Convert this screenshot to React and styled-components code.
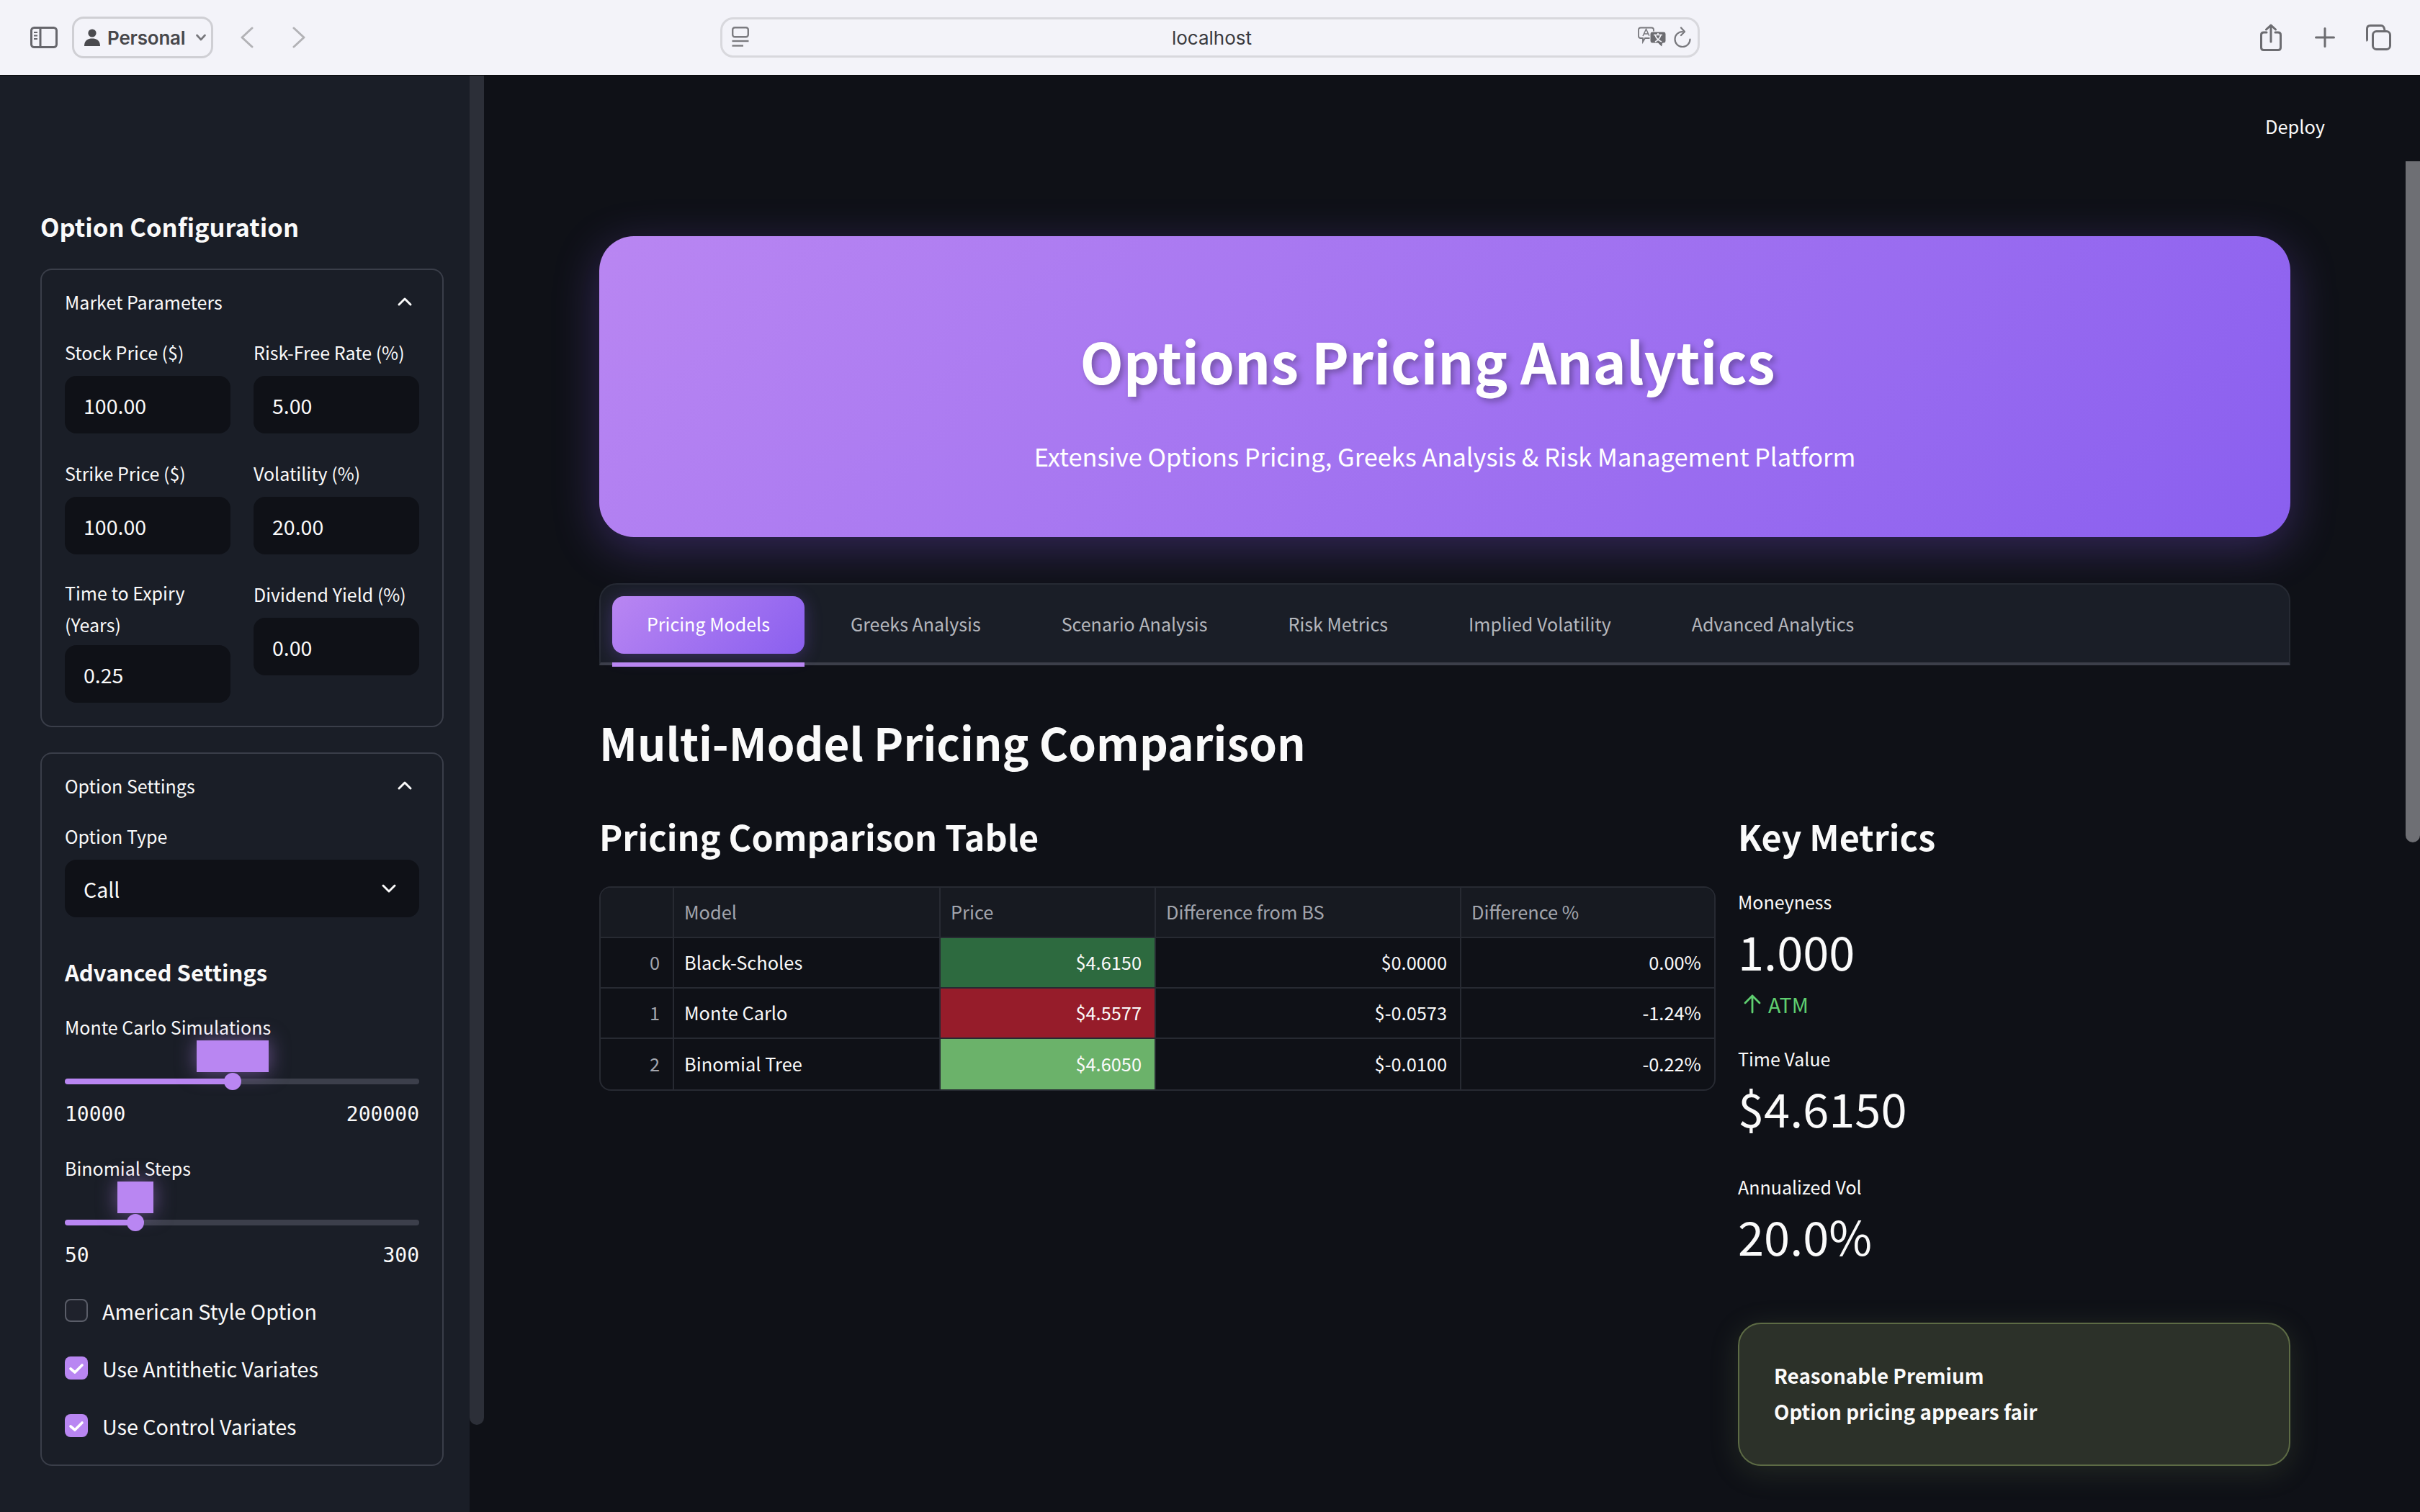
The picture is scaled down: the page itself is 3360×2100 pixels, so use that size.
import React from "react";
import styled, { createGlobalStyle } from "styled-components";

const SANS = `"Noto Sans CJK SC", "Noto Sans", sans-serif`;
const PURPLE = "#b986f2";
const MAIN_BG = "#0f1117";

const Global = createGlobalStyle`
  html, body { margin: 0; padding: 0; background: ${MAIN_BG}; }
  * { box-sizing: border-box; }
  body { font-family: ${SANS}; color: #fafafa; }
`;

const Page = styled.div`
  width: 3360px;
  height: 2100px;
  display: flex;
  flex-direction: column;
  overflow: hidden;
  position: relative;
`;

/* ---------- browser chrome ---------- */
const Toolbar = styled.header`
  flex: 0 0 105px;
  display: grid;
  grid-template-columns: 1000px 1360px 1fr;
  align-items: center;
  background: #f3f3f9;
  border-bottom: 1px solid #08090b;
`;
const ToolLeft = styled.div`
  display: flex;
  align-items: center;
  padding-left: 42px;
`;
const ToolIcon = styled.svg`
  display: block;
  flex: none;
  margin-left: ${(p) => p.$ml || 0}px;
`;
const ProfilePill = styled.div`
  display: flex;
  align-items: center;
  width: 196px;
  height: 58px;
  margin-left: 20px;
  padding-left: 14px;
  border: 3px solid #cfcfd4;
  border-radius: 16px;
  font-family: Inter, sans-serif;
  font-weight: 600;
  font-size: 26px;
  color: #47474b;
`;
const ProfileName = styled.span`
  margin-left: 10px;
  letter-spacing: -0.2px;
`;
const UrlBar = styled.div`
  height: 56px;
  display: flex;
  align-items: center;
  padding: 0 9px 0 13px;
  border: 3px solid #d8d8dd;
  border-radius: 18px;
`;
const UrlText = styled.span`
  flex: 1;
  text-align: center;
  font-family: Inter, sans-serif;
  font-size: 26px;
  color: #3a3a3e;
  padding-left: 51px;
`;
const ToolRight = styled.div`
  display: flex;
  align-items: center;
  justify-content: flex-end;
  padding-right: 40px;
`;

/* ---------- layout ---------- */
const Body = styled.div`
  flex: 1;
  display: flex;
  min-height: 0;
  position: relative;
`;
const Sidebar = styled.aside`
  flex: 0 0 652px;
  background: #1a1e27;
  padding: 181px 36px 0 56px;
`;
const SidebarTitle = styled.h3`
  margin: -2px 0 29px;
  font-size: 34.5px;
  line-height: 60px;
  font-weight: 600;
  color: #fafafa;
`;
const Panel = styled.section`
  border: 2px solid #3a3e49;
  border-radius: 16px;
  padding: 22px 32px ${(p) => p.$pb}px;
  & + & { margin-top: 35px; }
`;
const PanelHead = styled.div`
  display: flex;
  align-items: center;
  justify-content: space-between;
  height: 44px;
  font-size: 25px;
  color: #fafafa;
  padding-right: 8px;
  margin-bottom: 2px;
`;
const FieldGrid = styled.div`
  display: grid;
  grid-template-columns: 230px 230px;
  column-gap: 32px;
  margin-top: 27px;
`;
const FieldCol = styled.div`
  display: flex;
  flex-direction: column;
  gap: 34px;
`;
const Field = styled.div`
  display: flex;
  flex-direction: column;
  gap: ${(p) => (p.$wrapped ? 6 : 10)}px;
  margin-top: ${(p) => (p.$wrapped ? -2 : 0)}px;
`;
const FieldLabel = styled.label`
  display: block;
  margin: -1px 0 1px;
  font-size: 25px;
  line-height: 44px;
  color: #fafafa;
`;
const InputBox = styled.div`
  height: 80px;
  display: flex;
  align-items: center;
  justify-content: space-between;
  padding: 0 ${(p) => p.$pr || 26}px 0 26px;
  background: ${MAIN_BG};
  border-radius: 16px;
  font-size: 28.5px;
  color: #fafafa;
`;
const SelectField = styled(Field)`
  margin-top: 27px;
`;
const SubHead = styled.h4`
  margin: 48px 0 27px;
  font-size: 31px;
  line-height: 56px;
  font-weight: 600;
  color: #fafafa;
`;
const SliderBlock = styled.div`
  & + & { margin-top: 35px; }
`;
const SliderArea = styled.div`
  position: relative;
  height: 81px;
`;
const Track = styled.div`
  position: absolute;
  left: 0;
  right: 0;
  top: 49px;
  height: 8px;
  border-radius: 4px;
  background: linear-gradient(
    to right,
    ${PURPLE} 0 ${(p) => p.$pct}%,
    #3c3f4b ${(p) => p.$pct}% 100%
  );
`;
const Thumb = styled.div`
  position: absolute;
  top: -8px;
  left: ${(p) => p.$pct}%;
  width: 24px;
  height: 24px;
  margin-left: -12px;
  border-radius: 50%;
  background: ${PURPLE};
`;
const ThumbValue = styled.div`
  position: absolute;
  top: -53px;
  left: ${(p) => p.$pct}%;
  width: ${(p) => p.$w}px;
  height: 44px;
  margin-left: ${(p) => -p.$w / 2}px;
  background: ${PURPLE};
  box-shadow: 0 0 28px rgba(185, 134, 242, 0.5);
`;
const SliderRange = styled.div`
  display: flex;
  justify-content: space-between;
  font-family: "DejaVu Sans Mono", monospace;
  font-size: 28px;
  line-height: 36px;
  color: #fafafa;
`;
const CheckList = styled.div`
  display: flex;
  flex-direction: column;
  gap: 32px;
  margin-top: 34px;
`;
const CheckRow = styled.div`
  display: flex;
  align-items: center;
  gap: 20px;
  height: 48px;
  font-size: 28.7px;
  color: #fafafa;
`;
const CheckBox = styled.span`
  width: 32px;
  height: 32px;
  flex: none;
  display: flex;
  align-items: center;
  justify-content: center;
  border-radius: 8px;
  background: ${(p) => (p.$on ? PURPLE : "#1f222c")};
  border: ${(p) => (p.$on ? "none" : "2px solid #5a5d68")};
`;
const SideScroll = styled.div`
  position: absolute;
  left: 652px;
  top: 0;
  width: 20px;
  height: 1874px;
  background: #2c2f38;
  border-radius: 0 0 10px 10px;
`;

const Main = styled.main`
  flex: 1;
  min-width: 0;
  padding: 0 180px;
  background: ${MAIN_BG};
`;
const MainHeader = styled.div`
  height: 143px;
  padding-bottom: 4px;
  display: flex;
  align-items: center;
  justify-content: flex-end;
  margin-right: -48px;
  font-size: 25.4px;
  color: #fafafa;
`;
const Hero = styled.div`
  margin-top: 80px;
  height: 418px;
  border-radius: 48px;
  background: linear-gradient(135deg, #b986f2 0%, #8a5fef 100%);
  box-shadow: 0 16px 64px rgba(139, 92, 246, 0.3);
  display: flex;
  flex-direction: column;
  align-items: center;
`;
const HeroTitle = styled.h1`
  margin: 118px 48px 0 0;
  font-size: 78.4px;
  line-height: 108px;
  font-weight: 700;
  color: #fff;
  text-shadow: 4px 4px 8px rgba(0, 0, 0, 0.3);
`;
const HeroSub = styled.p`
  margin: 52px 0 0;
  font-size: 34.4px;
  line-height: 54px;
  color: #fff;
`;
const TabBar = styled.nav`
  margin-top: 64px;
  height: 114px;
  display: flex;
  gap: 16px;
  padding: 16px 16px 0;
  background: #1a1e27;
  border: 2px solid #262a33;
  border-bottom: 4px solid #3c3f4a;
  border-radius: 24px 24px 0 0;
`;
const Tab = styled.div`
  position: relative;
  height: 80px;
  padding: 0 48px 4px;
  display: flex;
  align-items: center;
  border-radius: 16px;
  font-size: 25.05px;
  color: ${(p) => (p.$active ? "#fff" : "#b5b7bd")};
  background: ${(p) =>
    p.$active ? "linear-gradient(135deg, #b986f2, #8a5fef)" : "transparent"};
  box-shadow: ${(p) =>
    p.$active ? "0 4px 24px rgba(139, 92, 246, 0.3)" : "none"};
  ${(p) =>
    p.$active &&
    `&::after {
      content: "";
      position: absolute;
      left: 0;
      right: 0;
      top: 92px;
      height: 6px;
      background: ${PURPLE};
    }`}
`;
const PageHeading = styled.h2`
  margin: 56px 0 45px;
  font-size: 62px;
  line-height: 100px;
  font-weight: 600;
  color: #fafafa;
`;
const Columns = styled.div`
  display: grid;
  grid-template-columns: 1550px 767px;
  column-gap: 31px;
`;
const SectionHeading = styled.h3`
  margin: -4px 0 ${(p) => p.$mb}px;
  font-size: 48.5px;
  line-height: 80px;
  font-weight: 600;
  color: #fafafa;
`;
const TableWrap = styled.div`
  border: 2px solid #272a32;
  border-radius: 16px;
  overflow: hidden;
`;
const DataTable = styled.table`
  width: 100%;
  table-layout: fixed;
  border-collapse: separate;
  border-spacing: 0;
  font-size: 25.4px;
`;
const Th = styled.th`
  height: 70px;
  padding: 0 18px 2px 14px;
  background: #171a21;
  color: #a2a5ad;
  font-weight: 400;
  text-align: left;
  border-right: 2px solid #272a32;
  border-bottom: 2px solid #272a32;
  &:last-child { border-right: none; }
`;
const Td = styled.td`
  height: 70px;
  padding: 0 18px 2px 14px;
  color: ${(p) => (p.$muted ? "#a2a5ad" : "#fafafa")};
  background: ${(p) => p.$bg || "transparent"};
  text-align: ${(p) => (p.$left ? "left" : "right")};
  border-right: 2px solid #272a32;
  border-bottom: 2px solid #272a32;
  &:last-child { border-right: none; }
  tr:last-child > & { border-bottom: none; }
`;
const MetricLabel = styled.div`
  margin-top: ${(p) => p.$mt}px;
  font-size: 25px;
  line-height: 44px;
  color: #fafafa;
`;
const MetricValue = styled.div`
  font-size: 65px;
  line-height: 92px;
  color: #fafafa;
`;
const MetricDelta = styled.div`
  margin-top: 8px;
  height: 40px;
  display: flex;
  align-items: center;
  gap: 8px;
  padding-left: 6px;
  font-size: 28.5px;
  color: #5fcf70;
`;
const VerdictCard = styled.div`
  margin-top: 75px;
  height: 199px;
  padding: 0 48px 4px;
  display: flex;
  flex-direction: column;
  justify-content: center;
  border: 2px solid #5d6b45;
  border-radius: 32px;
  background: #2c3129;
  box-shadow: 0 8px 40px rgba(120, 140, 90, 0.2);
  font-size: 27.8px;
  line-height: 50px;
  font-weight: 600;
  color: #fafafa;
`;
const MainScroll = styled.div`
  position: absolute;
  right: 0;
  top: 119px;
  width: 20px;
  height: 946px;
  background: #6e6f74;
  border-radius: 0 0 10px 10px;
`;

/* ---------- drawings ---------- */
const Chevron = ({ up, size = 24, color = "#fafafa", w = 3 }) => (
  <svg width={size} height={size} viewBox="0 0 24 24" fill="none" stroke={color} strokeWidth={w} strokeLinecap="round" strokeLinejoin="round">
    <path d={up ? "M4 16 L12 8 L20 16" : "M4 8 L12 16 L20 8"} />
  </svg>
);
const SidebarIcon = () => (
  <ToolIcon width="38" height="30" viewBox="0 0 38 30" fill="none" stroke="#66666c" strokeWidth="3">
    <rect x="1.5" y="1.5" width="35" height="27" rx="4" />
    <path d="M14 1.5 V28.5" />
    <path d="M5 8 H10 M5 12.5 H10 M5 17 H10" strokeWidth="2" />
  </ToolIcon>
);
const PersonIcon = () => (
  <svg width="22" height="24" viewBox="0 0 22 24" fill="#4a4a4e">
    <circle cx="11" cy="6" r="5.6" />
    <path d="M0 24 C0 16 5 13.5 11 13.5 C17 13.5 22 16 22 24 Z" />
  </svg>
);
const SmallChevron = () => (
  <ToolIcon $ml={15} width="14" height="10" viewBox="0 0 14 10" fill="none" stroke="#77777c" strokeWidth="2.6" strokeLinecap="round" strokeLinejoin="round">
    <path d="M1.5 2 L7 8 L12.5 2" />
  </ToolIcon>
);
const NavChevron = ({ back, ml }) => (
  <ToolIcon $ml={ml} width="18" height="30" viewBox="0 0 18 30" fill="none" stroke="#b2b2b6" strokeWidth="3" strokeLinecap="round" strokeLinejoin="round">
    <path d={back ? "M16 2 L2 15 L16 28" : "M2 2 L16 15 L2 28"} />
  </ToolIcon>
);
const ReaderIcon = () => (
  <svg width="24" height="30" viewBox="0 0 24 30" fill="none" stroke="#7b7b80" strokeWidth="2.4">
    <rect x="1.2" y="1.2" width="21.6" height="13" rx="3" />
    <path d="M0.5 20 H23.5" />
    <path d="M0.5 26.5 H16" />
  </svg>
);
const TranslateIcon = () => (
  <ToolIcon width="40" height="30" viewBox="0 0 40 30">
    <path d="M4 1.5 H19 Q22 1.5 22 4.5 V13 Q22 16 19 16 H10 L7 21 V16 H4 Q1 16 1 13 V4.5 Q1 1.5 4 1.5 Z" fill="none" stroke="#77777c" strokeWidth="1.8" />
    <path d="M7 13 L11.5 3.5 L16 13 M8.5 10 H14.5" fill="none" stroke="#77777c" strokeWidth="1.5" />
    <path d="M20 7 H36 Q39 7 39 10 V20 Q39 23 36 23 H34.5 L33.5 28.5 L28 23 H20 Q17 23 17 20 V10 Q17 7 20 7 Z" fill="#6c6c71" stroke="#f3f3f9" strokeWidth="1" />
    <path d="M22 11.5 H34 M28 9 V11.5 M24 21 Q30 18 32 11.5 M24 11.5 Q26 18 33 21" fill="none" stroke="#f3f3f9" strokeWidth="1.7" />
  </ToolIcon>
);
const ReloadIcon = () => (
  <ToolIcon $ml={10} width="24" height="30" viewBox="0 0 24 30" fill="none" stroke="#77777c" strokeWidth="2.2" strokeLinecap="round" strokeLinejoin="round">
    <path d="M12 7 A10.5 10.5 0 1 0 22.5 17.5" />
    <path d="M10 1.5 L15 7 L10 12" />
  </ToolIcon>
);
const ShareIcon = () => (
  <ToolIcon width="30" height="38" viewBox="0 0 30 38" fill="none" stroke="#6c6c71" strokeWidth="3" strokeLinecap="round" strokeLinejoin="round">
    <path d="M9 12 H5 Q1.5 12 1.5 15.5 V33 Q1.5 36.5 5 36.5 H25 Q28.5 36.5 28.5 33 V15.5 Q28.5 12 25 12 H21" />
    <path d="M15 25 V2 M8.5 8 L15 2 L21.5 8" />
  </ToolIcon>
);
const PlusIcon = () => (
  <ToolIcon $ml={46} width="28" height="28" viewBox="0 0 28 28" fill="none" stroke="#6c6c71" strokeWidth="3" strokeLinecap="round">
    <path d="M14 1.5 V26.5 M1.5 14 H26.5" />
  </ToolIcon>
);
const TabsIcon = () => (
  <ToolIcon $ml={43} width="35" height="36" viewBox="0 0 35 36" fill="none" stroke="#6c6c71" strokeWidth="3">
    <path d="M2 23 Q1.5 22.5 1.5 20 V6 Q1.5 1.5 6 1.5 H21 Q25 1.5 26 8" />
    <rect x="9.5" y="9.5" width="24" height="25" rx="5" />
  </ToolIcon>
);
const CheckMark = () => (
  <svg width="24" height="24" viewBox="0 0 24 24" fill="none" stroke="#fff" strokeWidth="3.6" strokeLinecap="round" strokeLinejoin="round">
    <path d="M4 13 L10 18 L20 8" />
  </svg>
);
const ArrowUp = () => (
  <svg width="28" height="28" viewBox="0 0 28 28" fill="none" stroke="#5fcf70" strokeWidth="2.8" strokeLinecap="round" strokeLinejoin="round">
    <path d="M14 26 V3 M4 13 L14 3 L24 13" />
  </svg>
);

/* ---------- data ---------- */
const leftFields = [
  { label: "Stock Price ($)", value: "100.00" },
  { label: "Strike Price ($)", value: "100.00" },
  { label: "Time to Expiry (Years)", value: "0.25", wrapped: true },
];
const rightFields = [
  { label: "Risk-Free Rate (%)", value: "5.00" },
  { label: "Volatility (%)", value: "20.00" },
  { label: "Dividend Yield (%)", value: "0.00" },
];
const tabs = ["Pricing Models", "Greeks Analysis", "Scenario Analysis", "Risk Metrics", "Implied Volatility", "Advanced Analytics"];
const rows = [
  ["0", "Black-Scholes", "$4.6150", "$0.0000", "0.00%", "#2d6a3f"],
  ["1", "Monte Carlo", "$4.5577", "$-0.0573", "-1.24%", "#961c2a"],
  ["2", "Binomial Tree", "$4.6050", "$-0.0100", "-0.22%", "#6bb26a"],
];
const colWidths = [102, 370, 299, 424, 351];

const FieldColumn = ({ fields }) => (
  <FieldCol>
    {fields.map((f) => (
      <Field key={f.label} $wrapped={f.wrapped}>
        <FieldLabel>{f.label}</FieldLabel>
        <InputBox>{f.value}</InputBox>
      </Field>
    ))}
  </FieldCol>
);

const Slider = ({ label, min, max, pct, bubble }) => (
  <SliderBlock>
    <FieldLabel as="div">{label}</FieldLabel>
    <SliderArea>
      <Track $pct={pct}>
        <ThumbValue $pct={pct} $w={bubble} />
        <Thumb $pct={pct} />
      </Track>
    </SliderArea>
    <SliderRange>
      <span>{min}</span>
      <span>{max}</span>
    </SliderRange>
  </SliderBlock>
);

export default function App() {
  return (
    <Page>
      <Global />
      <Toolbar>
        <ToolLeft>
          <SidebarIcon />
          <ProfilePill>
            <PersonIcon />
            <ProfileName>Personal</ProfileName>
            <SmallChevron />
          </ProfilePill>
          <NavChevron back ml={38} />
          <NavChevron ml={54} />
        </ToolLeft>
        <UrlBar>
          <ReaderIcon />
          <UrlText>localhost</UrlText>
          <TranslateIcon />
          <ReloadIcon />
        </UrlBar>
        <ToolRight>
          <ShareIcon />
          <PlusIcon />
          <TabsIcon />
        </ToolRight>
      </Toolbar>
      <Body>
        <Sidebar>
          <SidebarTitle>Option Configuration</SidebarTitle>
          <Panel $pb={32}>
            <PanelHead>
              Market Parameters
              <Chevron up />
            </PanelHead>
            <FieldGrid>
              <FieldColumn fields={leftFields} />
              <FieldColumn fields={rightFields} />
            </FieldGrid>
          </Panel>
          <Panel $pb={30}>
            <PanelHead>
              Option Settings
              <Chevron up />
            </PanelHead>
            <SelectField>
              <FieldLabel>Option Type</FieldLabel>
              <InputBox $pr={30}>
                Call
                <Chevron />
              </InputBox>
            </SelectField>
            <SubHead>Advanced Settings</SubHead>
            <Slider label="Monte Carlo Simulations" min="10000" max="200000" pct={47.4} bubble={100} />
            <Slider label="Binomial Steps" min="50" max="300" pct={19.9} bubble={50} />
            <CheckList>
              <CheckRow>
                <CheckBox />
                American Style Option
              </CheckRow>
              <CheckRow>
                <CheckBox $on>
                  <CheckMark />
                </CheckBox>
                Use Antithetic Variates
              </CheckRow>
              <CheckRow>
                <CheckBox $on>
                  <CheckMark />
                </CheckBox>
                Use Control Variates
              </CheckRow>
            </CheckList>
          </Panel>
        </Sidebar>
        <SideScroll />
        <Main>
          <MainHeader>Deploy</MainHeader>
          <Hero>
            <HeroTitle>Options Pricing Analytics</HeroTitle>
            <HeroSub>Extensive Options Pricing, Greeks Analysis &amp; Risk Management Platform</HeroSub>
          </Hero>
          <TabBar>
            {tabs.map((t, i) => (
              <Tab key={t} $active={i === 0}>
                {t}
              </Tab>
            ))}
          </TabBar>
          <PageHeading>Multi-Model Pricing Comparison</PageHeading>
          <Columns>
            <div>
              <SectionHeading $mb={30}>Pricing Comparison Table</SectionHeading>
              <TableWrap>
                <DataTable>
                  <colgroup>
                    {colWidths.map((w, i) => (
                      <col key={i} width={w} />
                    ))}
                  </colgroup>
                  <thead>
                    <tr>
                      <Th />
                      <Th>Model</Th>
                      <Th>Price</Th>
                      <Th>Difference from BS</Th>
                      <Th>Difference %</Th>
                    </tr>
                  </thead>
                  <tbody>
                    {rows.map((r) => (
                      <tr key={r[0]}>
                        <Td $muted>{r[0]}</Td>
                        <Td $left>{r[1]}</Td>
                        <Td $bg={r[5]}>{r[2]}</Td>
                        <Td>{r[3]}</Td>
                        <Td>{r[4]}</Td>
                      </tr>
                    ))}
                  </tbody>
                </DataTable>
              </TableWrap>
            </div>
            <div>
              <SectionHeading $mb={29}>Key Metrics</SectionHeading>
              <MetricLabel $mt={0}>Moneyness</MetricLabel>
              <MetricValue>1.000</MetricValue>
              <MetricDelta>
                <ArrowUp />
                ATM
              </MetricDelta>
              <MetricLabel $mt={34}>Time Value</MetricLabel>
              <MetricValue>$4.6150</MetricValue>
              <MetricLabel $mt={42}>Annualized Vol</MetricLabel>
              <MetricValue>20.0%</MetricValue>
              <VerdictCard>
                <div>Reasonable Premium</div>
                <div>Option pricing appears fair</div>
              </VerdictCard>
            </div>
          </Columns>
        </Main>
        <MainScroll />
      </Body>
    </Page>
  );
}
